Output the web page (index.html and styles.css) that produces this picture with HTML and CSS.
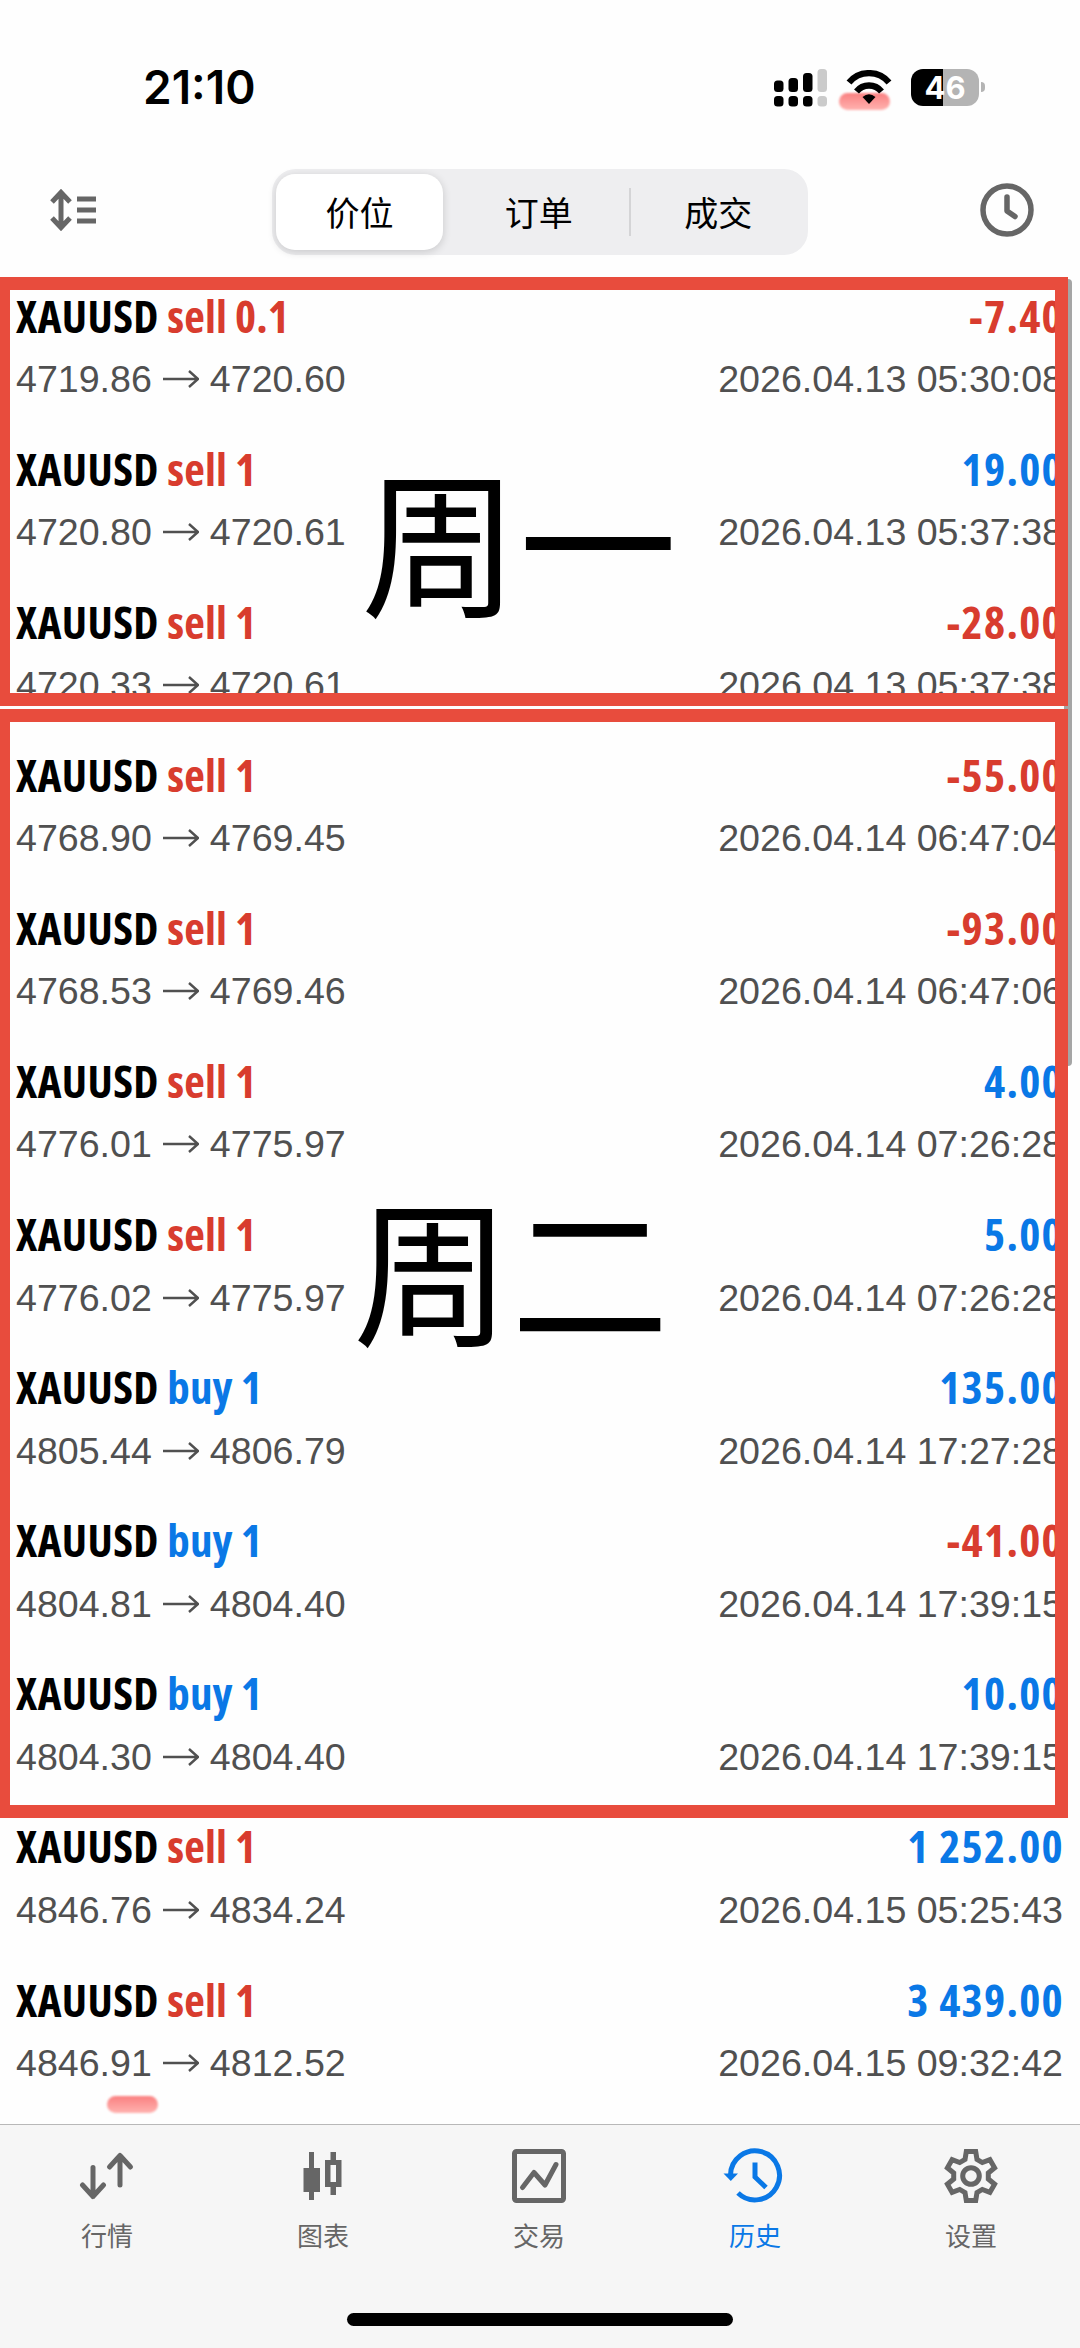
FILE: index.html
```
<!DOCTYPE html>
<html lang="zh">
<head>
    <meta charset="UTF-8">
    <meta name="viewport" content="width=device-width, initial-scale=1.0">
    <title>历史</title>
    <link rel="stylesheet" href="styles.css">
</head>
<body>
    <div class="status-bar">
        <span class="time">21:10</span>
        <span class="marker marker-wifi"></span>
        <svg class="signal" width="54" height="38" viewBox="0 0 54 38">
            <rect x="0" y="11.5" width="9.5" height="11.5" rx="3.5"/>
            <rect x="14.5" y="9" width="9.5" height="14" rx="3.5"/>
            <rect x="29" y="4" width="9.5" height="19" rx="3.5"/>
            <rect x="43.5" y="0" width="9.5" height="23" rx="3.5" fill="#cbcbcb"/>
            <rect x="0" y="27" width="9.5" height="10.5" rx="3.5"/>
            <rect x="14.5" y="27" width="9.5" height="10.5" rx="3.5"/>
            <rect x="29" y="27" width="9.5" height="10.5" rx="3.5"/>
            <rect x="43.5" y="27" width="9.5" height="10.5" rx="3.5" fill="#cbcbcb"/>
        </svg>
        <svg class="wifi" width="46" height="36" viewBox="0 0 46 36">
            <path d="M3 12.5A26 26 0 0 1 43 12.5" fill="none" stroke="#000" stroke-width="6.3"/>
            <path d="M10.5 21.5A16 16 0 0 1 35.5 21.5" fill="none" stroke="#000" stroke-width="6.3"/>
            <path d="M16.5 27Q23 21.5 29.5 27L23 34Z"/>
        </svg>
        <div class="battery"><span>46</span></div>
        <i class="battery-tip"></i>
    </div>

    <div class="toolbar">
        <svg width="46" height="44" viewBox="0 0 46 44" fill="none" stroke="#666" stroke-width="5">
            <path d="M11 5V39M2 14l9-9.5 9 9.5M2 30l9 9.5 9-9.5"/>
            <path d="M27 11h19M27 22h19M27 33h19"/>
        </svg>
        <div class="tabs">
            <span class="tab active">价位</span>
            <span class="tab">订单</span>
            <span class="tab last">成交</span>
        </div>
        <svg width="54" height="54" viewBox="0 0 54 54" fill="none" stroke="#666" stroke-width="5.5">
            <circle cx="27" cy="27" r="24"/>
            <path d="M27 14v14l8 5.5" stroke-linecap="round" stroke-linejoin="round"/>
        </svg>
    </div>

    <div class="history" id="history">
        <div class="frame frame-mon"></div>
        <div class="frame frame-tue"></div>
        <div class="day day-mon">周一</div>
        <div class="day day-tue">周二</div>
        <span class="scrollbar"></span>
        <span class="marker marker-row"></span>
    </div>

    <div class="nav">
        <a class="nav-item">
            <svg width="56" height="56" viewBox="0 0 56 56" fill="none" stroke="#666" stroke-width="5" stroke-linecap="round" stroke-linejoin="round">
                <path d="M14 19.5v29M3.5 37L14 48.5 24.5 37"/>
                <path d="M41 37V8M30.5 19L41 7.5 51.5 19"/>
            </svg>
            <span>行情</span>
        </a>
        <a class="nav-item">
            <svg width="56" height="56" viewBox="0 0 56 56" fill="#666">
                <path d="M14 4h5v16h6v24h-6v8h-5v-8H8.5V20H14z"/>
                <path fill-rule="evenodd" d="M35.5 4H41v8h5.5v27H41v8h-5.5v-8H30V12h5.5zM35.5 17v17H41V17z"/>
            </svg>
            <span>图表</span>
        </a>
        <a class="nav-item">
            <svg width="56" height="56" viewBox="0 0 56 56" fill="none" stroke="#666" stroke-width="5" stroke-linecap="round" stroke-linejoin="round">
                <rect x="3.5" y="3.5" width="49" height="49" rx="2"/>
                <path d="M11.5 39.5l11.5-15L34 37l11-20.5"/>
            </svg>
            <span>交易</span>
        </a>
        <a class="nav-item active">
            <svg width="64" height="56" viewBox="0 0 64 56" fill="none" stroke="#0a78e6" stroke-width="5">
                <path d="M7.5 27A24.5 24.5 0 1 1 15 45"/>
                <path d="M.5 25.5H15l-7.2 7.5z" fill="#0a78e6" stroke="none"/>
                <path d="M32 14.5V29l11 10.5"/>
            </svg>
            <span>历史</span>
        </a>
        <a class="nav-item">
            <svg width="56" height="56" viewBox="-28 -28 56 56" fill="none" stroke="#666" stroke-width="5">
                <path d="M-6-16.5L-4.7-24.5H4.7L6-16.5 11.3-13.4 18.9-16.3 23.6-8.2 17.3-3V3L23.6 8.2 18.9 16.3 11.3 13.4 6 16.5 4.7 24.5H-4.7L-6 16.5-11.3 13.4-18.9 16.3-23.6 8.2-17.3 3V-3L-23.6-8.2-18.9-16.3-11.3-13.4z"/>
                <circle cx="0" cy="0" r="8.3"/>
            </svg>
            <span>设置</span>
        </a>
        <i class="home-indicator"></i>
    </div>

    <script src="script.js"></script>
</body>
</html>
```
FILE: styles.css
```
body {
    margin: 0;
    width: 1080px;
    height: 2348px;
    background: #fefefe;
    font-family: "Liberation Sans", "Noto Sans CJK SC", sans-serif;
    display: flex;
    flex-direction: column;
    overflow: hidden;
}
.status-bar {
    position: relative;
    height: 169px;
    display: flex;
    align-items: flex-start;
    padding: 0 95px 0 143px;
    box-sizing: border-box;
    flex-shrink: 0;
}
.time {
    font: 600 46px/54px Inter, sans-serif;
    margin-top: 60px;
    margin-right: auto;
}
.signal {
    margin-top: 69px;
    margin-right: 18px;
}
.wifi {
    position: relative;
    margin-top: 70px;
    margin-right: 19px;
}
.battery {
    width: 68px;
    height: 37px;
    margin-top: 69px;
    border-radius: 12px;
    background: linear-gradient(90deg, #000 32px, #b4b4b4 32px);
    color: #fff;
    font: 700 31px/37px Inter, sans-serif;
    text-align: center;
}
.battery-tip {
    width: 4px;
    height: 10px;
    margin: 82px 0 0 2px;
    border-radius: 0 5px 5px 0;
    background: #b4b4b4;
}
.marker {
    position: absolute;
    width: 51px;
    height: 17px;
    border-radius: 9px;
    background: linear-gradient(#fa8080, #ffb3b0);
    filter: blur(1px);
}
.marker-wifi {
    left: 839px;
    top: 93px;
}
.toolbar {
    height: 86px;
    display: flex;
    align-items: center;
    justify-content: space-between;
    padding: 0 46px 0 50px;
    flex-shrink: 0;
}
.toolbar > svg {
    margin-bottom: 4px;
}
.tabs {
    display: flex;
    width: 536px;
    height: 86px;
    padding: 5px 0 5px 4px;
    box-sizing: border-box;
    border-radius: 24px;
    background: #eeeef0;
    margin-left: 4px;
}
.tab {
    flex: 1;
    font-family: "Noto Sans CJK SC", sans-serif;
    font-size: 34px;
    line-height: 76px;
    text-align: center;
}
.tab.active {
    flex: 0 0 167px;
    margin-right: 6px;
    border-radius: 19px;
    background: #fff;
    box-shadow: 0 2px 8px rgba(0, 0, 0, 0.16);
}
.tab.last {
    background: linear-gradient(#d4d4d6, #d4d4d6) 0 14px / 2px 48px no-repeat;
}
.history {
    position: relative;
    height: 1869px;
    padding-top: 32.5px;
    box-sizing: border-box;
    overflow: hidden;
    flex-shrink: 0;
}
.row {
    height: 153.1px;
    padding: 0 17px 0 16px;
}
.line {
    display: flex;
    justify-content: space-between;
}
.title {
    height: 69.5px;
    font-family: "Open Sans", sans-serif;
    font-weight: 670;
    font-stretch: 75%;
    font-size: 45px;
    line-height: 56px;
    letter-spacing: 0.4px;
}
.name span {
    letter-spacing: 0.1px;
}
.value {
    letter-spacing: 1.3px;
    margin-right: -1px;
}
.sell, .loss {
    color: #d83c2e;
}
.buy, .profit {
    color: #0a78e6;
}
.prices {
    font-size: 37.6px;
    line-height: 44px;
    color: #505050;
}
.prices svg {
    width: 36px;
    height: 18px;
    margin: 0 11px 4px 11px;
}
.frame {
    position: absolute;
    left: -3px;
    width: 1071px;
    box-sizing: border-box;
    border: 13px solid #e84c3d;
    z-index: 2;
}
.frame-mon {
    top: 22px;
    height: 429px;
}
.frame-tue {
    top: 454px;
    height: 1109px;
}
.day {
    position: absolute;
    font-family: "Noto Sans CJK SC", sans-serif;
    font-size: 158px;
    line-height: 160px;
    z-index: 3;
}
.day-mon {
    left: 361px;
    top: 202px;
}
.day-tue {
    left: 353px;
    top: 931px;
}
.scrollbar {
    position: absolute;
    right: 8px;
    top: 24px;
    width: 8px;
    height: 787px;
    border-radius: 4px;
    background: #a5a5a5;
}
.marker-row {
    left: 107px;
    top: 1841px;
}
.nav {
    position: relative;
    height: 224px;
    display: flex;
    background: #f6f6f6;
    border-top: 1px solid #b8b8b8;
    box-sizing: border-box;
}
.nav-item {
    flex: 1;
    display: flex;
    flex-direction: column;
    align-items: center;
    padding: 23px 2px 0 0;
    font-family: "Noto Sans CJK SC", sans-serif;
    font-size: 26px;
    line-height: 36px;
    color: #666;
}
.nav-item span {
    margin-top: 13px;
}
.nav-item.active {
    color: #0a78e6;
}
.home-indicator {
    position: absolute;
    left: 347px;
    bottom: 22px;
    width: 386px;
    height: 13px;
    border-radius: 7px;
    background: #000;
}
```
FILE: script.js
```
const deals = [
    ['sell', '0.1', '4719.86', '4720.60', '-7.40', '2026.04.13 05:30:08'],
    ['sell', '1', '4720.80', '4720.61', '19.00', '2026.04.13 05:37:38'],
    ['sell', '1', '4720.33', '4720.61', '-28.00', '2026.04.13 05:37:38'],
    ['sell', '1', '4768.90', '4769.45', '-55.00', '2026.04.14 06:47:04'],
    ['sell', '1', '4768.53', '4769.46', '-93.00', '2026.04.14 06:47:06'],
    ['sell', '1', '4776.01', '4775.97', '4.00', '2026.04.14 07:26:28'],
    ['sell', '1', '4776.02', '4775.97', '5.00', '2026.04.14 07:26:28'],
    ['buy', '1', '4805.44', '4806.79', '135.00', '2026.04.14 17:27:28'],
    ['buy', '1', '4804.81', '4804.40', '-41.00', '2026.04.14 17:39:15'],
    ['buy', '1', '4804.30', '4804.40', '10.00', '2026.04.14 17:39:15'],
    ['sell', '1', '4846.76', '4834.24', '1 252.00', '2026.04.15 05:25:43'],
    ['sell', '1', '4846.91', '4812.52', '3 439.00', '2026.04.15 09:32:42']
];

const arrow = '<svg viewBox="0 0 36 18" fill="none" stroke="#505050" stroke-width="2.4"><path d="M0 9h34M26 1l9 8-9 8"/></svg>';

document.getElementById('history').insertAdjacentHTML('afterbegin', deals.map(([side, volume, open, close, profit, time]) => `
    <div class="row">
        <div class="line title">
            <span class="name">XAUUSD <span class="${side}">${side} ${volume}</span></span>
            <span class="value ${profit.startsWith('-') ? 'loss' : 'profit'}">${profit}</span>
        </div>
        <div class="line prices">
            <span>${open}${arrow}${close}</span>
            <span>${time}</span>
        </div>
    </div>`).join(''));
```
